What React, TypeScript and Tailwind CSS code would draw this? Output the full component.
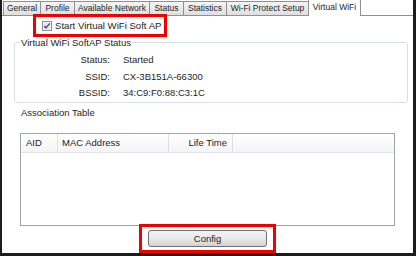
import React from "react";

const tabs = [
  { label: "General", w: "w-[37px]" },
  { label: "Profile", w: "w-[34px]" },
  { label: "Available Network", w: "w-[75px]" },
  { label: "Status", w: "w-[34px]" },
  { label: "Statistics", w: "w-[43px]" },
  { label: "Wi-Fi Protect Setup", w: "w-[82px]" },
];

const statusRows = [
  { label: "Status:", value: "Started" },
  { label: "SSID:", value: "CX-3B151A-66300" },
  { label: "BSSID:", value: "34:C9:F0:88:C3:1C" },
];

const CheckBox = () => (
  <svg width="10" height="10" viewBox="0 0 10 10" className="shrink-0">
    <rect x="0.5" y="0.5" width="9" height="9" fill="#f4f4f4" stroke="#8f8f8f" />
    <rect x="1.5" y="1.5" width="7" height="7" fill="#e6e9ee" />
    <path d="M2.2 5 L4 7 L7.8 2.4" fill="none" stroke="#3d4f88" strokeWidth="1.4" />
  </svg>
);

export default function App() {
  return (
    <div className="w-[416px] h-[256px] overflow-hidden bg-white flex flex-col border-l-2 border-r-[3px] border-b-[3px] border-[#1c1c1c] font-['Liberation_Sans',Arial,sans-serif] text-[#1e1e1e]">
      {/* tab strip */}
      <div className="h-[16px] shrink-0 flex items-end pl-[1px] border-b border-[#8e9096]">
        {tabs.map((t) => (
          <div
            key={t.label}
            className={`${t.w} h-[14px] shrink-0 flex items-center justify-center border-l border-t border-[#8e9096] bg-gradient-to-b from-[#f4f4f4] to-[#dfdfdf] text-[8.5px] leading-none whitespace-nowrap`}
          >
            {t.label}
          </div>
        ))}
        <div className="w-[53px] h-[17px] -mb-px shrink-0 relative z-10 flex items-start justify-center pt-[3px] border-l border-t border-r border-[#8e9096] bg-white text-[8.5px] leading-none whitespace-nowrap">
          Virtual WiFi
        </div>
      </div>

      {/* highlighted checkbox */}
      <div className="relative z-20 -mt-[2px] ml-[31px] w-[134px] h-[23px] border-[3px] border-[#ee0000] flex items-center gap-[3px] pl-[6px]">
        <CheckBox />
        <span className="text-[9.6px] leading-none whitespace-nowrap">Start Virtual WiFi Soft AP</span>
      </div>

      {/* softAP status group */}
      <div className="relative mt-[5px] ml-[12px] w-[394px] h-[61px] border border-[#d5dfe5] rounded-[3px] pt-[9px]">
        <span className="absolute left-[5px] -top-[6px] bg-white px-[1px] text-[9.5px] leading-[11px] whitespace-nowrap">
          Virtual WiFi SoftAP Status
        </span>
        {statusRows.map((r) => (
          <div key={r.label} className="h-[16.5px] flex items-center text-[9.5px] whitespace-nowrap">
            <span className="w-[95px] text-right">{r.label}</span>
            <span className="ml-[13px]">{r.value}</span>
          </div>
        ))}
      </div>

      <div className="mt-[4px] ml-[19px] h-[12px] text-[9.5px] leading-[12px]">Association Table</div>

      {/* association table */}
      <div className="mt-[14px] ml-[18px] w-[375px] h-[93px] border border-[#a0a4a8] shrink-0">
        <div className="h-[19px] flex border-b border-[#e6e6e6] bg-gradient-to-b from-white to-[#f4f5f7] text-[9.5px]">
          <div className="w-[37px] flex items-center pl-[5px] border-r border-[#e0e0e0]">AID</div>
          <div className="w-[111px] flex items-center pl-[4px] border-r border-[#e0e0e0]">MAC Address</div>
          <div className="w-[64px] flex items-center justify-end pr-[5px] border-r border-[#e0e0e0]">Life Time</div>
        </div>
      </div>

      {/* highlighted config button */}
      <div className="relative z-20 -mt-[2px] mx-auto w-[137px] h-[29px] border-[3px] border-[#ee0000] flex items-center justify-center">
        <button className="w-[119px] h-[17px] border border-[#707070] rounded-[3px] bg-gradient-to-b from-[#f3f3f3] via-[#e9e9e9] to-[#d3d3d3] text-[9.5px] leading-none">
          Config
        </button>
      </div>
    </div>
  );
}
